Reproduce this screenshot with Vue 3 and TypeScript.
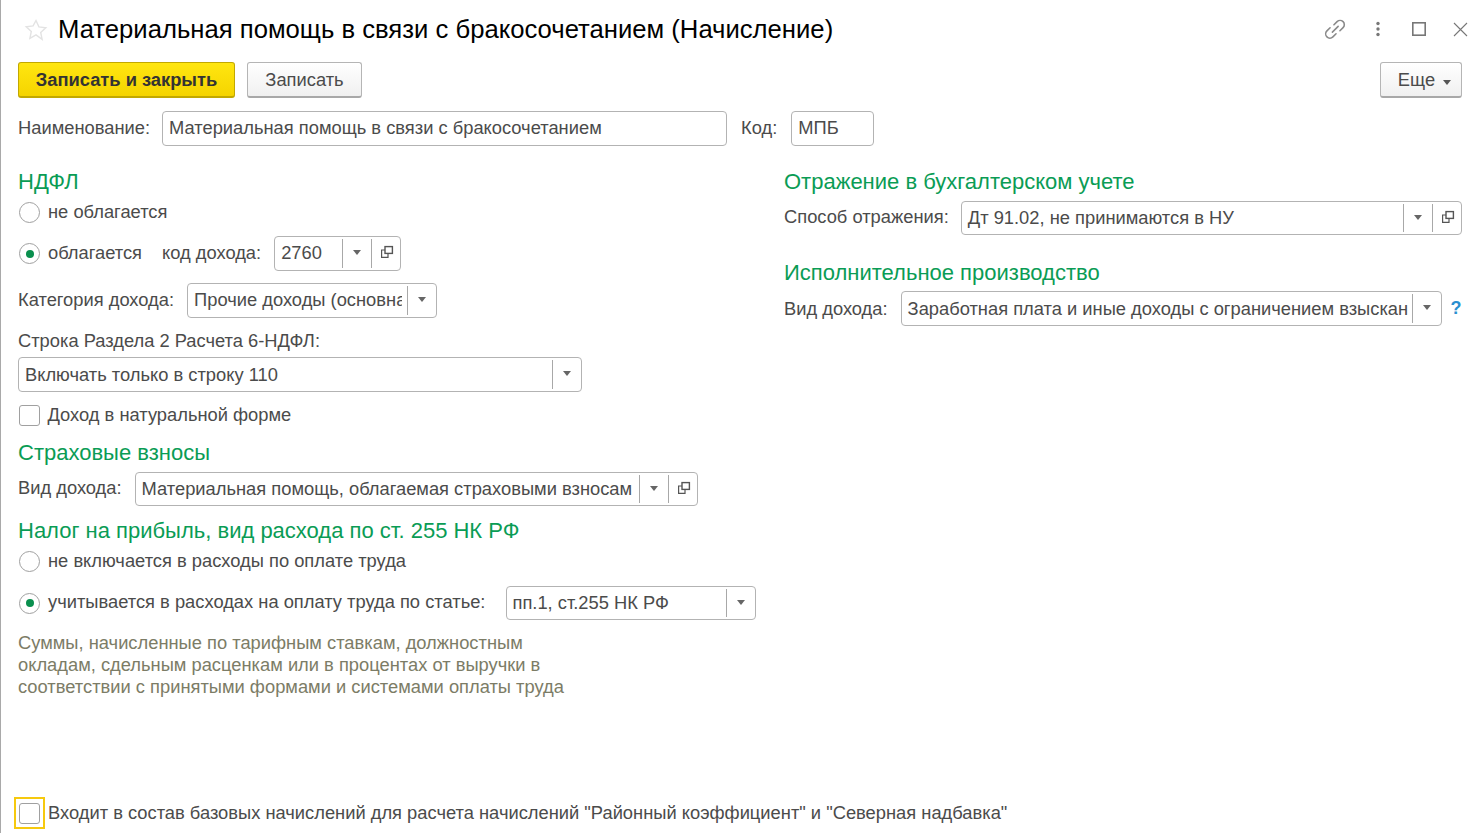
<script setup lang="ts">
const title = 'Материальная помощь в связи с бракосочетанием (Начисление)'
</script>

<template>
  <div class="page">
    <header class="head">
      <svg class="star" width="24" height="24" viewBox="0 0 24 24"><path d="M12 2.5l2.9 6.4 6.9.8-5.1 4.7 1.4 6.9L12 16.9l-6.1 3.4 1.4-6.9-5.1-4.7 6.9-.8z" fill="none" stroke="#e3e3e3" stroke-width="1.4"/></svg>
      <h1 class="title">{{ title }}</h1>
      <div class="win">
        <svg class="w-link" width="22" height="22" viewBox="0 0 21 21" fill="none" stroke="#8a8a8a" stroke-width="1.5" stroke-linecap="round"><path d="M9.5 6.5l3-3a4 4 0 0 1 5.7 5.7l-3 3"/><path d="M11.5 15l-3 3a4 4 0 0 1-5.7-5.7l3-3"/><path d="M8 13.5L13.5 8"/></svg>
        <svg class="w-dots" width="6" height="16" viewBox="0 0 6 16" fill="#777"><circle cx="3" cy="2.5" r="1.7"/><circle cx="3" cy="8" r="1.7"/><circle cx="3" cy="13.5" r="1.7"/></svg>
        <svg class="w-max" width="14" height="14" viewBox="0 0 14 14" fill="none" stroke="#777" stroke-width="1.6"><rect x="0.8" y="0.8" width="12.4" height="12.4"/></svg>
        <svg class="w-close" width="15" height="15" viewBox="0 0 15 15" fill="none" stroke="#777" stroke-width="1.1"><path d="M1 1l13 13M14 1L1 14"/></svg>
      </div>
    </header>

    <div class="toolbar">
      <button class="btn primary">Записать и закрыть</button>
      <button class="btn plain">Записать</button>
      <button class="btn more">Еще <i class="tri small"></i></button>
    </div>

    <div class="name-row">
      <label class="lbl">Наименование:</label>
      <div class="field f-name"><span class="val">Материальная помощь в связи с бракосочетанием</span></div>
      <label class="lbl code-l">Код:</label>
      <div class="field f-code"><span class="val">МПБ</span></div>
    </div>

    <div class="cols">
      <section class="left">
        <h2 class="sec">НДФЛ</h2>
        <div class="opt o1"><i class="radio"></i><span>не облагается</span></div>
        <div class="opt o2">
          <i class="radio on"></i><span>облагается</span>
          <span class="kod">код дохода:</span>
          <div class="field f-kod">
            <span class="val">2760</span>
            <span class="part"><i class="tri"></i></span>
            <span class="part open"><svg width="14" height="14" viewBox="0 0 14 14" fill="none" stroke="#555" stroke-width="1.2"><rect x="5" y="1.6" width="7.4" height="6.8" stroke-width="1.4"/><path d="M5 5H1.6v7.4H8V8.5" /></svg></span>
          </div>
        </div>
        <div class="row r-cat">
          <label class="lbl">Категория дохода:</label>
          <div class="field f-cat">
            <span class="val">Прочие доходы (основная налоговая база)</span>
            <span class="part"><i class="tri"></i></span>
          </div>
        </div>
        <div class="lbl l-str">Строка Раздела 2 Расчета 6-НДФЛ:</div>
        <div class="field f-str">
          <span class="val">Включать только в строку 110</span>
          <span class="part"><i class="tri"></i></span>
        </div>
        <div class="opt o-nat"><i class="check"></i><span>Доход в натуральной форме</span></div>
        <h2 class="sec s-str">Страховые взносы</h2>
        <div class="row r-vid">
          <label class="lbl">Вид дохода:</label>
          <div class="field f-vid">
            <span class="val">Материальная помощь, облагаемая страховыми взносами</span>
            <span class="part"><i class="tri"></i></span>
            <span class="part open"><svg width="14" height="14" viewBox="0 0 14 14" fill="none" stroke="#555" stroke-width="1.2"><rect x="5" y="1.6" width="7.4" height="6.8" stroke-width="1.4"/><path d="M5 5H1.6v7.4H8V8.5" /></svg></span>
          </div>
        </div>
        <h2 class="sec s-tax">Налог на прибыль, вид расхода по ст. 255 НК РФ</h2>
        <div class="opt o5"><i class="radio"></i><span>не включается в расходы по оплате труда</span></div>
        <div class="opt o6">
          <i class="radio on"></i><span>учитывается в расходах на оплату труда по статье:</span>
          <div class="field f-st">
            <span class="val">пп.1, ст.255 НК РФ</span>
            <span class="part"><i class="tri"></i></span>
          </div>
        </div>
        <p class="note">Суммы, начисленные по тарифным ставкам, должностным<br>окладам, сдельным расценкам или в процентах от выручки в<br>соответствии с принятыми формами и системами оплаты труда</p>
      </section>

      <section class="right">
        <h2 class="sec">Отражение в бухгалтерском учете</h2>
        <div class="row r-sp">
          <label class="lbl">Способ отражения:</label>
          <div class="field f-sp">
            <span class="val">Дт 91.02, не принимаются в НУ</span>
            <span class="part"><i class="tri"></i></span>
            <span class="part open"><svg width="14" height="14" viewBox="0 0 14 14" fill="none" stroke="#555" stroke-width="1.2"><rect x="5" y="1.6" width="7.4" height="6.8" stroke-width="1.4"/><path d="M5 5H1.6v7.4H8V8.5" /></svg></span>
          </div>
        </div>
        <h2 class="sec s-isp">Исполнительное производство</h2>
        <div class="row r-isp">
          <label class="lbl">Вид дохода:</label>
          <div class="field f-isp">
            <span class="val">Заработная плата и иные доходы с ограничением взыскания</span>
            <span class="part"><i class="tri"></i></span>
          </div>
          <span class="help">?</span>
        </div>
      </section>
    </div>

    <div class="foot">
      <span class="focus"><i class="check"></i></span>
      <span>Входит в состав базовых начислений для расчета начислений "Районный коэффициент" и "Северная надбавка"</span>
    </div>
  </div>
</template>

<style>
html, body { margin: 0; background: #fff; }
</style>

<style scoped>
.page {
  box-sizing: border-box;
  width: 1482px;
  height: 833px;
  overflow: hidden;
  display: flex;
  flex-direction: column;
  padding-left: 17px;
  padding-right: 20px;
  border-left: 1px solid #a9a9a9;
  font-family: "Liberation Sans", Arial, sans-serif;
  font-size: 18.32px;
  color: #4b4b4b;
  position: relative;
}
.head {
  height: 62px;
  display: flex;
  align-items: center;
  flex: none;
  padding-bottom: 4px;
  box-sizing: border-box;
}
.star { margin-left: 6px; margin-top: 2px; flex: none; }
.title {
  margin: 0 0 0 10px;
  font-size: 25.66px;
  font-weight: 400;
  color: #000;
  white-space: nowrap;
  line-height: 30px;
}
.win {
  margin-left: auto;
  margin-right: -6px;
  display: flex;
  align-items: center;
}
.w-dots { margin-left: 29px; }
.w-max { margin-left: 31px; }
.w-close { margin-left: 27px; }
.toolbar { display: flex; flex: none; height: 36px; gap: 12px; }
.btn {
  font: inherit;
  border-radius: 3px;
  padding: 1px 0 0;
  height: 36px;
  box-sizing: border-box;
  color: #4b4b4b;
  border: 1px solid #b5b5b5;
  border-bottom: 2px solid #a8a8a8;
  background: linear-gradient(#fff, #f0f0f0);
}
.primary {
  width: 217px;
  font-weight: 700;
  color: #333;
  border-color: #c2a800;
  background: linear-gradient(#ffe610, #f5d400);
}
.plain { width: 115px; }
.more { width: 82px; margin-left: auto; display: flex; align-items: center; justify-content: center; gap: 8px; padding-left: 7px; }
.name-row { display: flex; align-items: center; margin-top: 13px; height: 35px; flex: none; }
.lbl { white-space: nowrap; }
.name-row > .lbl, .r-cat > .lbl, .r-sp > .lbl, .r-vid > .lbl { padding-bottom: 2px; }
.o2 > span, .o6 > span { padding-bottom: 2px; }
.field {
  box-sizing: border-box;
  height: 35px;
  border: 1px solid #b3b3b3;
  border-radius: 4px;
  background: #fff;
  display: flex;
  align-items: stretch;
  flex: none;
  overflow: hidden;
}
.val {
  flex: 1;
  min-width: 0;
  overflow: hidden;
  white-space: nowrap;
  line-height: 31px;
  padding-left: 6px;
  margin-right: 5px;
}
.f-str .val, .f-isp .val { line-height: 33px; }
.part {
  box-sizing: border-box;
  flex: none;
  width: 29px;
  border-left: 1px solid #a8a8a8;
  margin: 2px 0;
  display: flex;
  align-items: center;
  justify-content: center;
}
.open svg { margin: 0 0 3px 2px; }
.tri {
  display: block;
  width: 0;
  height: 0;
  border-left: 4px solid transparent;
  border-right: 4px solid transparent;
  border-top: 5px solid #666;
  margin-bottom: 2px;
}
.tri.small { margin-top: 4px; border-top-color: #555; margin-bottom: 0; }
.f-name { width: 565px; margin-left: 12px; }
.code-l { margin-left: 14px; }
.f-code { width: 83px; margin-left: 14px; }
.cols { display: flex; flex: none; margin-top: 21px; }
.left { width: 738px; flex: none; }
.right { margin-left: 28px; width: 678px; flex: none; }
.sec {
  margin: 0;
  font-size: 22px;
  font-weight: 400;
  color: #0a9c55;
  line-height: 30px;
  height: 30px;
}
.opt { display: flex; align-items: center; white-space: nowrap; }
.radio {
  flex: none;
  box-sizing: border-box;
  width: 21px;
  height: 21px;
  border: 1px solid #a0a0a0;
  border-radius: 50%;
  margin: 0 8px 0 1px;
  display: flex;
  align-items: center;
  justify-content: center;
  background: #fff;
}
.radio.on::after {
  content: "";
  width: 8px;
  height: 8px;
  border-radius: 50%;
  background: #0a8f4e;
}
.check {
  display: block;
  flex: none;
  box-sizing: border-box;
  width: 21px;
  height: 21px;
  border: 1px solid #a0a0a0;
  border-radius: 3px;
  background: #fff;
}
.o1 { height: 22px; margin-top: 4px; }
.o2 { height: 35px; margin-top: 13px; }
.kod { margin-left: 20px; }
.f-kod { width: 127px; margin-left: 13px; }
.f-kod .val, .f-st .val { margin-right: 0; }
.r-cat { height: 35px; margin-top: 12px; }
.row { display: flex; align-items: center; }
.f-cat { width: 250px; margin-left: 13px; }
.l-str { margin-top: 12px; line-height: 22px; height: 22px; }
.f-str { width: 564px; margin-top: 5px; }
.o-nat { height: 22px; margin-top: 12px; }
.o-nat .check { margin: 0 7.5px 0 1px; }
.s-str { margin-top: 12px; }
.r-vid { height: 34px; margin-top: 4px; }
.f-vid { width: 563px; height: 34px; margin-left: 13px; }
.f-vid .val { margin-right: 7px; }
.s-tax { margin-top: 10px; }
.o5 { height: 22px; margin-top: 4px; }
.o6 { height: 34px; margin-top: 14px; }
.f-st { width: 250px; height: 34px; margin-left: 21px; }
.f-st .val { padding-left: 5px; }
.note {
  margin: 12px 0 0;
  line-height: 22px;
  color: #7c7c66;
}
.r-sp { height: 34px; margin-top: 4px; }
.f-sp { width: 501px; height: 34px; margin-left: 12px; }
.s-isp { margin-top: 23px; }
.r-isp { height: 35px; margin-top: 3px; }
.f-isp { width: 541px; margin-left: 13px; }
.f-isp .val { margin-right: 4px; }
.help { margin-left: 9px; color: #2a8fd0; font-weight: 700; font-size: 18px; }
.foot {
  position: absolute;
  left: 13px;
  top: 797px;
  display: flex;
  align-items: center;
  white-space: nowrap;
}
.focus {
  box-sizing: border-box;
  width: 31px;
  height: 32px;
  border: 2px solid #f6c90e;
  display: flex;
  align-items: center;
  justify-content: center;
  margin-right: 3px;
}
</style>
